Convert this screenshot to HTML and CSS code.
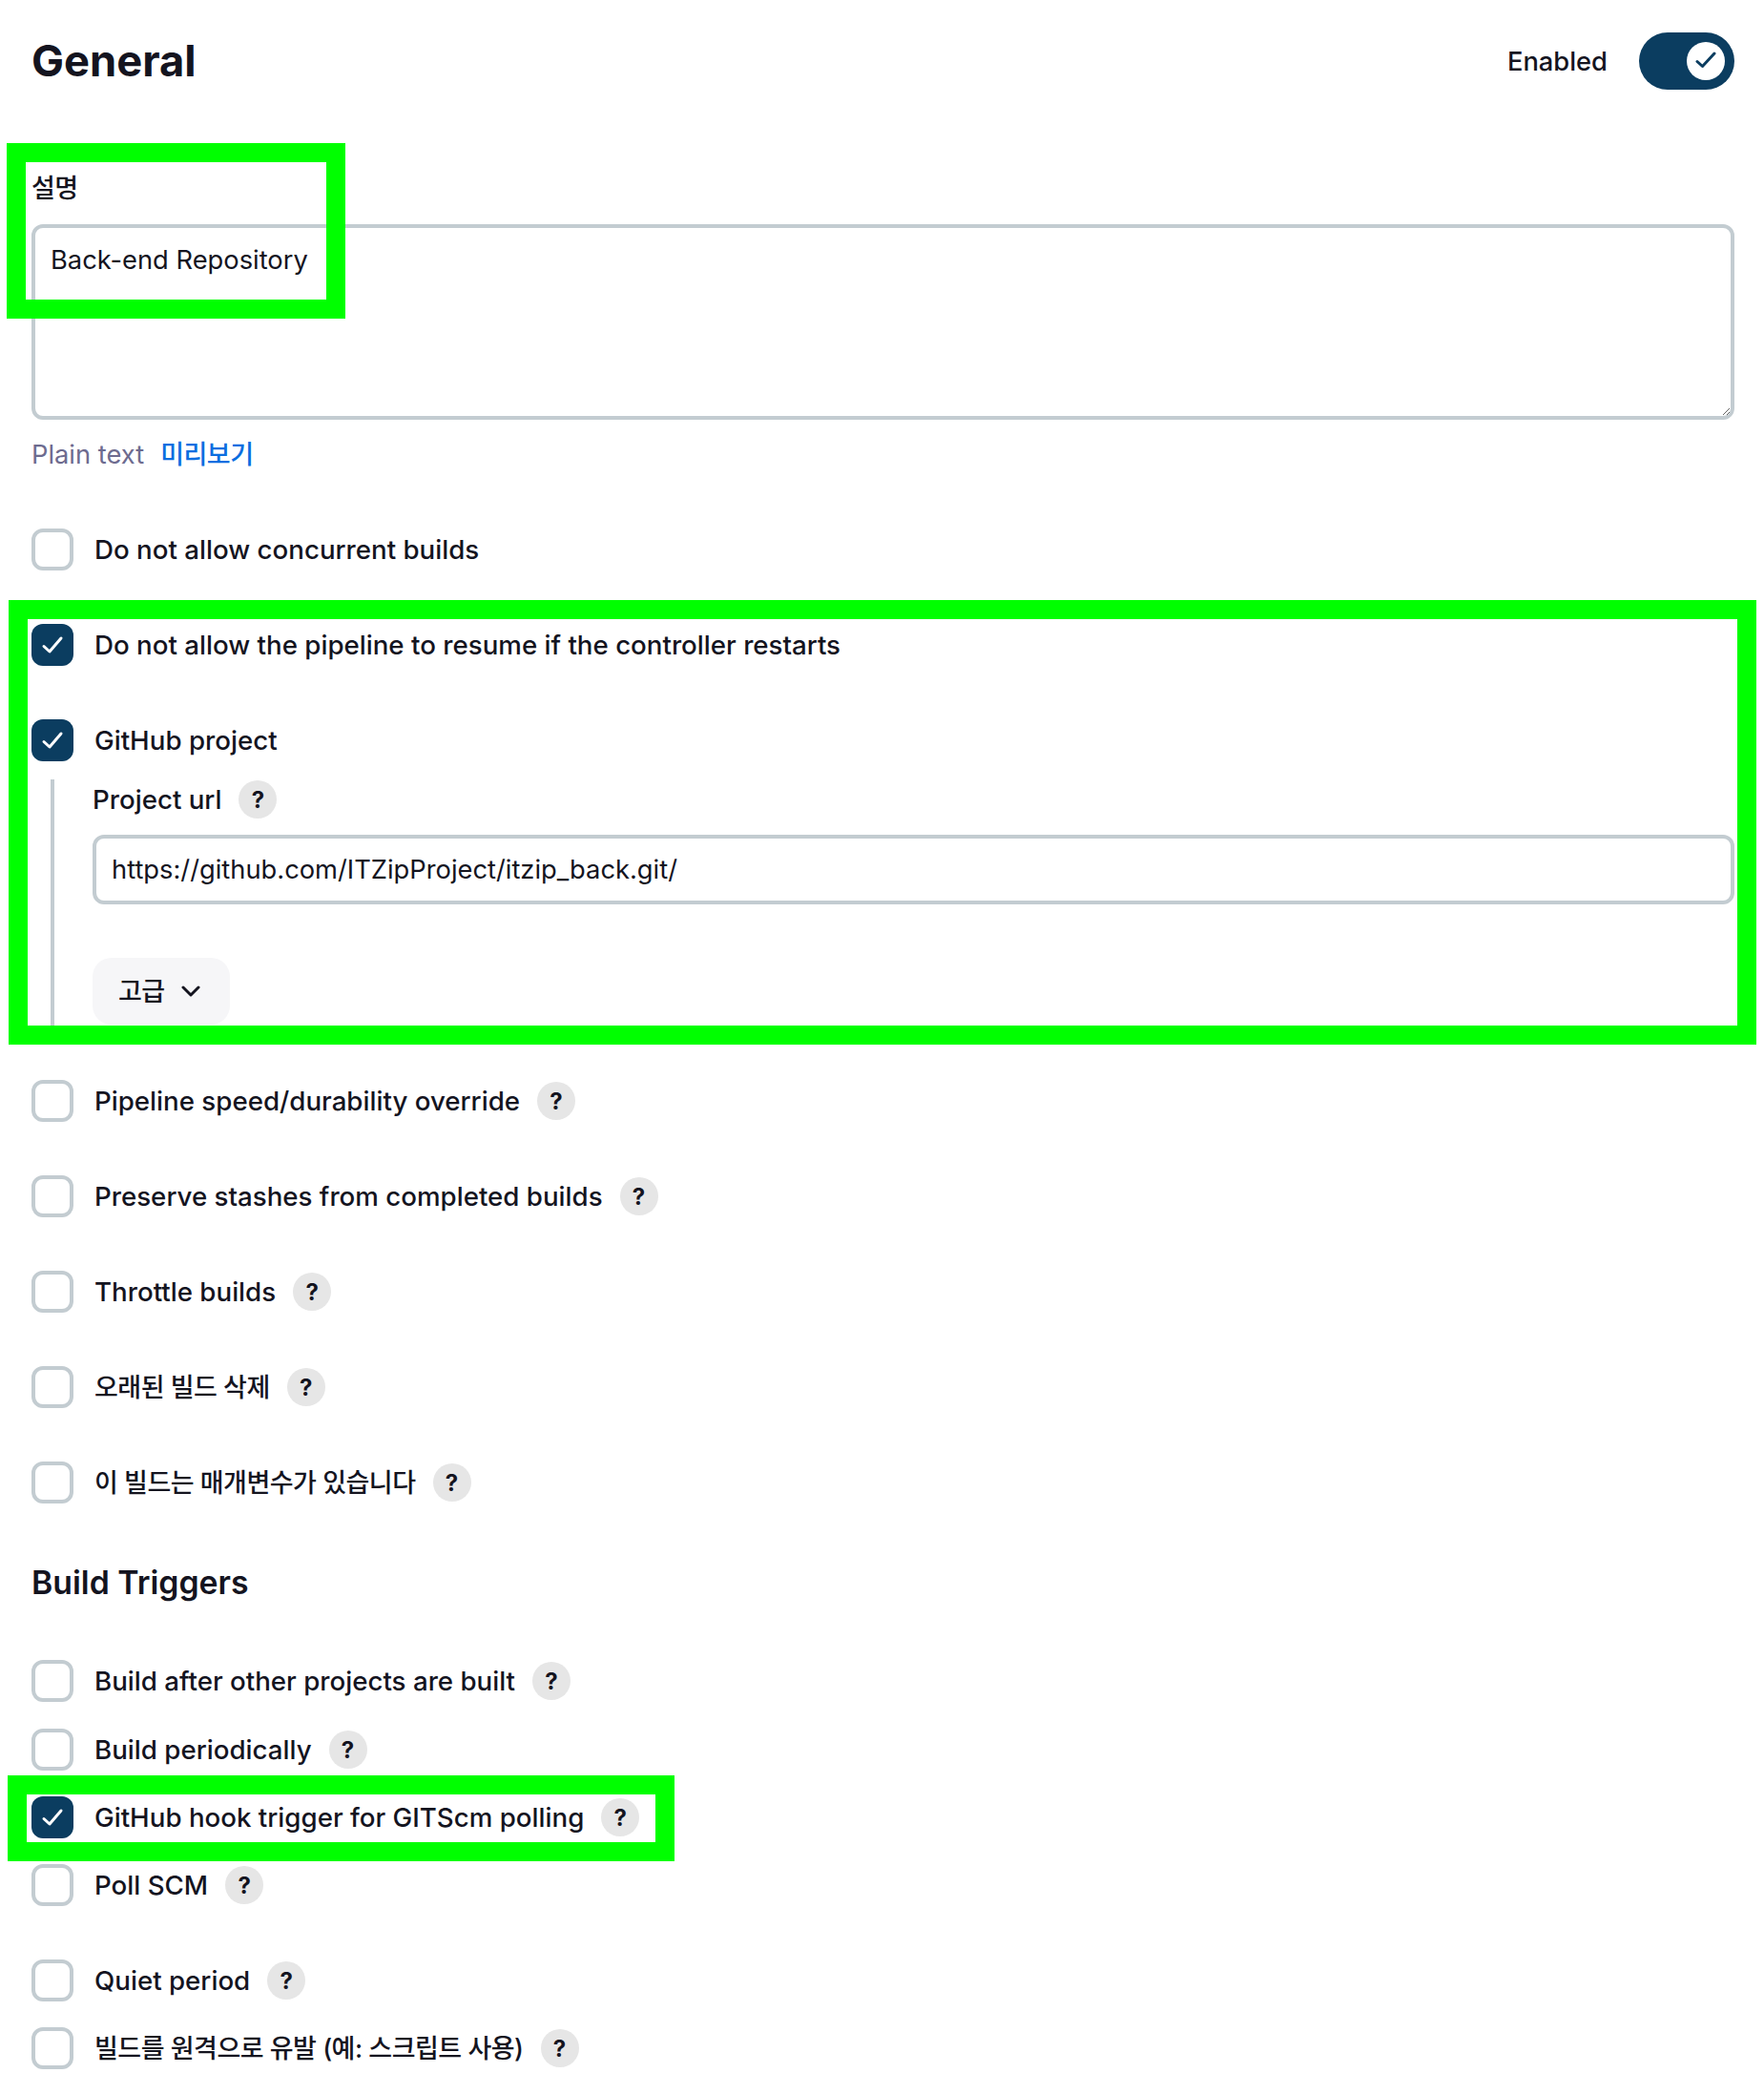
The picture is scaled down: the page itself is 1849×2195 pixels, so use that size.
FILE: index.html
```html
<!DOCTYPE html>
<html lang="en">
<head>
    <meta charset="UTF-8">
    <title>General</title>
    <link rel="stylesheet" href="styles.css">
</head>
<body>
    <div class="page">
        <div class="top">
            <h1>General</h1>
            <div class="enabled">
                <span>Enabled</span>
                <span class="toggle">
                    <span class="knob">
                        <svg width="24" height="24" viewBox="0 0 24 24"><path d="M3 12.5l5.5 5L21 4" fill="none" stroke="#0b3d60" stroke-width="3" stroke-linecap="round" stroke-linejoin="round"/></svg>
                    </span>
                </span>
            </div>
        </div>

        <div class="field-label ko">설명</div>
        <textarea class="desc">Back-end Repository</textarea>
        <div class="preview-line">
            <span class="muted">Plain text</span>
            <a class="link ko" href="#">미리보기</a>
        </div>

        <div class="row first"><span class="box"></span><span>Do not allow concurrent builds</span></div>
        <div class="row">
            <span class="box on"><svg width="24" height="24" viewBox="0 0 24 24"><path d="M3 13.5l6 5.5L21 5" fill="none" stroke="#fff" stroke-width="3" stroke-linecap="round" stroke-linejoin="round"/></svg></span>
            <span>Do not allow the pipeline to resume if the controller restarts</span>
        </div>
        <div class="row">
            <span class="box on"><svg width="24" height="24" viewBox="0 0 24 24"><path d="M3 13.5l6 5.5L21 5" fill="none" stroke="#fff" stroke-width="3" stroke-linecap="round" stroke-linejoin="round"/></svg></span>
            <span>GitHub project</span>
        </div>
        <div class="nested">
            <div class="nested-label"><span>Project url</span><span class="help">?</span></div>
            <input class="url" type="text" value="https://github.com/ITZipProject/itzip_back.git/">
            <button class="advanced">
                <span class="ko">고급</span>
                <svg width="20" height="12" viewBox="0 0 20 12"><path d="M2 2l8 8 8-8" fill="none" stroke="#14141f" stroke-width="3" stroke-linecap="round" stroke-linejoin="round"/></svg>
            </button>
        </div>
        <div class="row"><span class="box"></span><span>Pipeline speed/durability override</span><span class="help">?</span></div>
        <div class="row"><span class="box"></span><span>Preserve stashes from completed builds</span><span class="help">?</span></div>
        <div class="row"><span class="box"></span><span>Throttle builds</span><span class="help">?</span></div>
        <div class="row"><span class="box"></span><span class="ko">오래된 빌드 삭제</span><span class="help">?</span></div>
        <div class="row"><span class="box"></span><span class="ko">이 빌드는 매개변수가 있습니다</span><span class="help">?</span></div>

        <h2>Build Triggers</h2>
        <div class="row first"><span class="box"></span><span>Build after other projects are built</span><span class="help">?</span></div>
        <div class="row tight wide"><span class="box"></span><span>Build periodically</span><span class="help">?</span></div>
        <div class="row tight">
            <span class="box on"><svg width="24" height="24" viewBox="0 0 24 24"><path d="M3 13.5l6 5.5L21 5" fill="none" stroke="#fff" stroke-width="3" stroke-linecap="round" stroke-linejoin="round"/></svg></span>
            <span>GitHub hook trigger for GITScm polling</span><span class="help">?</span>
        </div>
        <div class="row tight"><span class="box"></span><span>Poll SCM</span><span class="help">?</span></div>
        <div class="row"><span class="box"></span><span>Quiet period</span><span class="help">?</span></div>
        <div class="row tight"><span class="box"></span><span class="ko">빌드를 원격으로 유발 (예: 스크립트 사용)</span><span class="help">?</span></div>

        <!-- green highlight boxes drawn over the screenshot -->
        <div class="mark mark-desc"></div>
        <div class="mark mark-github"></div>
        <div class="mark mark-hook"></div>
    </div>
</body>
</html>
```

FILE: styles.css
```css
html, body {
    margin: 0;
    background-color: #fff;
}
body {
    color: #14141f;
    font-family: Inter, "Noto Sans CJK KR", sans-serif;
    font-size: 27.7px;
    font-weight: 500;
}
.ko {
    font-size: 27px;
    letter-spacing: -0.5px;
}
.page {
    position: relative;
    height: 2195px;
    box-sizing: border-box;
    padding: 34px 31px 0 33px;
    overflow: hidden;
}
.top {
    display: flex;
    justify-content: space-between;
    align-items: center;
    height: 60px;
}
h1 {
    margin: -1px 0 1px;
    font-size: 45.3px;
    font-weight: 700;
}
h2 {
    margin: 61px 0 0;
    height: 44px;
    line-height: 44px;
    font-size: 33.8px;
    font-weight: 600;
}
.enabled {
    display: flex;
    align-items: center;
    gap: 33px;
    font-size: 27.3px;
}
.toggle {
    display: flex;
    align-items: center;
    justify-content: flex-end;
    box-sizing: border-box;
    width: 100px;
    height: 60px;
    padding-right: 10px;
    border-radius: 30px;
    background-color: #0b3d60;
}
.knob {
    display: flex;
    align-items: center;
    justify-content: center;
    width: 40px;
    height: 40px;
    border-radius: 50%;
    background-color: #fff;
}
.field-label {
    margin-top: 87px;
    height: 34px;
    line-height: 34px;
}
.desc, .url {
    display: block;
    box-sizing: border-box;
    width: 100%;
    border: 4px solid #c3ccd1;
    border-radius: 12px;
    outline: none;
    color: #14141f;
    font-family: Inter, "Noto Sans CJK KR", sans-serif;
    font-size: 27.3px;
    font-weight: 400;
}
.desc {
    margin-top: 20px;
    height: 205px;
    padding: 16px 16px;
    line-height: 36px;
}
.preview-line {
    display: flex;
    gap: 17px;
    margin-top: 19px;
    height: 36px;
    line-height: 36px;
    font-size: 27.3px;
    font-weight: 400;
}
.muted {
    color: #6d6b8f;
}
.link {
    color: #0a6ee0;
    font-weight: 500;
    text-decoration: none;
}
.row {
    display: flex;
    align-items: center;
    height: 44px;
    margin-top: 56px;
}
.row.first {
    margin-top: 59px;
}
.row.tight {
    margin-top: 27px;
}
.row.wide {
    margin-top: 28px;
}
.row .ko, .advanced .ko {
    padding-bottom: 3px;
}
.box {
    display: flex;
    align-items: center;
    justify-content: center;
    flex: none;
    box-sizing: border-box;
    width: 44px;
    height: 44px;
    margin-right: 22px;
    border: 4px solid #c3ccd1;
    border-radius: 12px;
}
.box.on {
    border: 0;
    background-color: #0b3d60;
}
.help {
    display: flex;
    align-items: center;
    justify-content: center;
    flex: none;
    width: 40px;
    height: 40px;
    margin-left: 18px;
    border-radius: 50%;
    background-color: #e6e6e6;
    font-size: 24px;
    font-weight: 700;
}
.nested {
    margin: 19px 0 0 20px;
    padding: 1px 0 2px 40px;
    border-left: 4px solid #c3ccd1;
}
.nested-label {
    display: flex;
    align-items: center;
    height: 40px;
}
.url {
    margin-top: 17px;
    height: 73px;
    padding: 0 16px;
}
.advanced {
    display: flex;
    align-items: center;
    justify-content: space-between;
    box-sizing: border-box;
    width: 144px;
    height: 70px;
    margin-top: 56px;
    padding: 0 31px 0 27px;
    border: 0;
    border-radius: 20px;
    background-color: #f6f6f8;
    color: #14141f;
    font-family: Inter, "Noto Sans CJK KR", sans-serif;
    font-weight: 500;
}
.mark {
    position: absolute;
    box-sizing: border-box;
    border: 20px solid #00ff00;
}
.mark-desc {
    left: 7px;
    top: 150px;
    width: 355px;
    height: 184px;
}
.mark-github {
    left: 9px;
    top: 629px;
    width: 1832px;
    height: 466px;
}
.mark-hook {
    left: 8px;
    top: 1861px;
    width: 699px;
    height: 90px;
}
```
